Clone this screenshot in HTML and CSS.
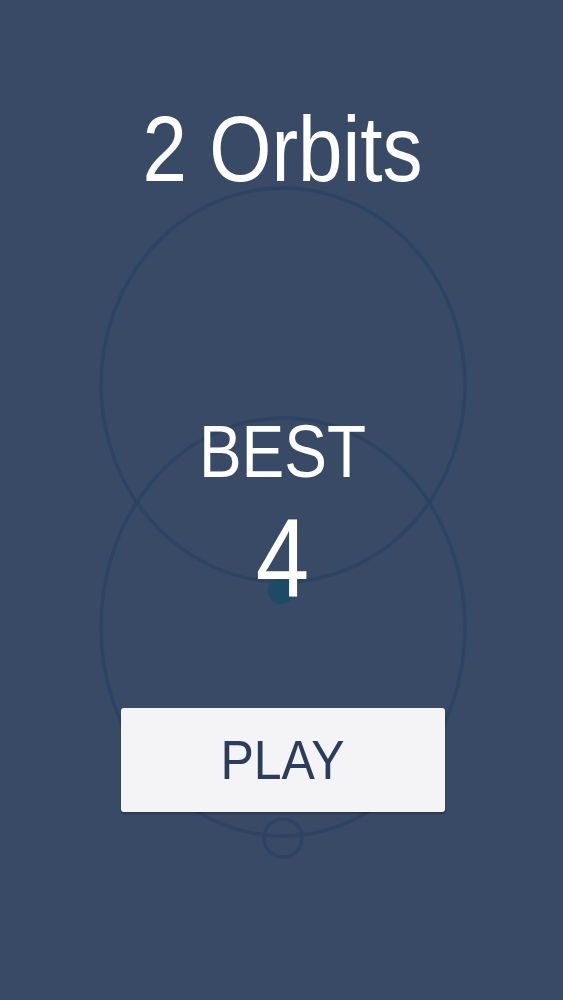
FILE: index.html
```html
<!DOCTYPE html>
<html lang="en">
  <head>
    <meta charset="UTF-8" />
    <meta name="viewport" content="width=device-width, initial-scale=1.0" />
    <title>2 Orbits</title>
    <link rel="stylesheet" href="styles.css">
  </head>
  <body>
    <div class="screen">
      <!-- the two orbits drawn behind the menu -->
      <svg class="orbits" width="563" height="1000" viewBox="0 0 563 1000">
        <ellipse cx="283" cy="385" rx="182" ry="197" class="orbit" />
        <ellipse cx="283" cy="627" rx="182" ry="209" class="orbit" />
        <circle cx="283" cy="838" r="19" class="orbit" />
        <circle cx="281" cy="591" r="13" class="planet" />
      </svg>

      <div class="menu">
        <h1 class="title">2 Orbits</h1>
        <div class="best-label">BEST</div>
        <div class="best-score">4</div>
        <button class="play"><span>PLAY</span></button>
      </div>
    </div>
  </body>
</html>
```

FILE: styles.css
```css
body {
  margin: 0;
  padding: 0;
  background-color: #394a67;
  font-family: "Liberation Sans", Arial, sans-serif;
  color: #fff;
}
.screen {
  position: relative;
  width: 563px;
  height: 1000px;
  overflow: hidden;
}
.orbits {
  position: absolute;
  top: 0;
  left: 0;
}
.orbit {
  fill: none;
  stroke: #2c4462;
  stroke-width: 3.5;
}
.planet {
  fill: #1f4a66;
}
.menu {
  position: relative;
  display: flex;
  flex-direction: column;
  align-items: center;
  padding-top: 109px;
  padding-left: 2px;
}
.title {
  margin: 0;
  font-size: 80px;
  font-weight: normal;
  line-height: 80px;
  transform: scaleY(1.17);
}
.best-label {
  margin-top: 231px;
  font-size: 64px;
  line-height: 64px;
  transform: scaleY(1.15);
}
.best-score {
  margin-top: 26px;
  font-size: 96px;
  line-height: 96px;
  transform: scaleY(1.15);
}
.play {
  margin-top: 102px;
  width: 324px;
  height: 104px;
  background: #f4f4f6;
  border: none;
  border-radius: 3px;
  box-shadow: 0 2px 2px rgba(0, 0, 0, 0.25);
  font-family: "Liberation Sans", Arial, sans-serif;
  font-size: 50px;
  line-height: 1;
  color: #2b3d5b;
  cursor: pointer;
}
.play span {
  display: inline-block;
  transform: scaleY(1.12);
}
```
